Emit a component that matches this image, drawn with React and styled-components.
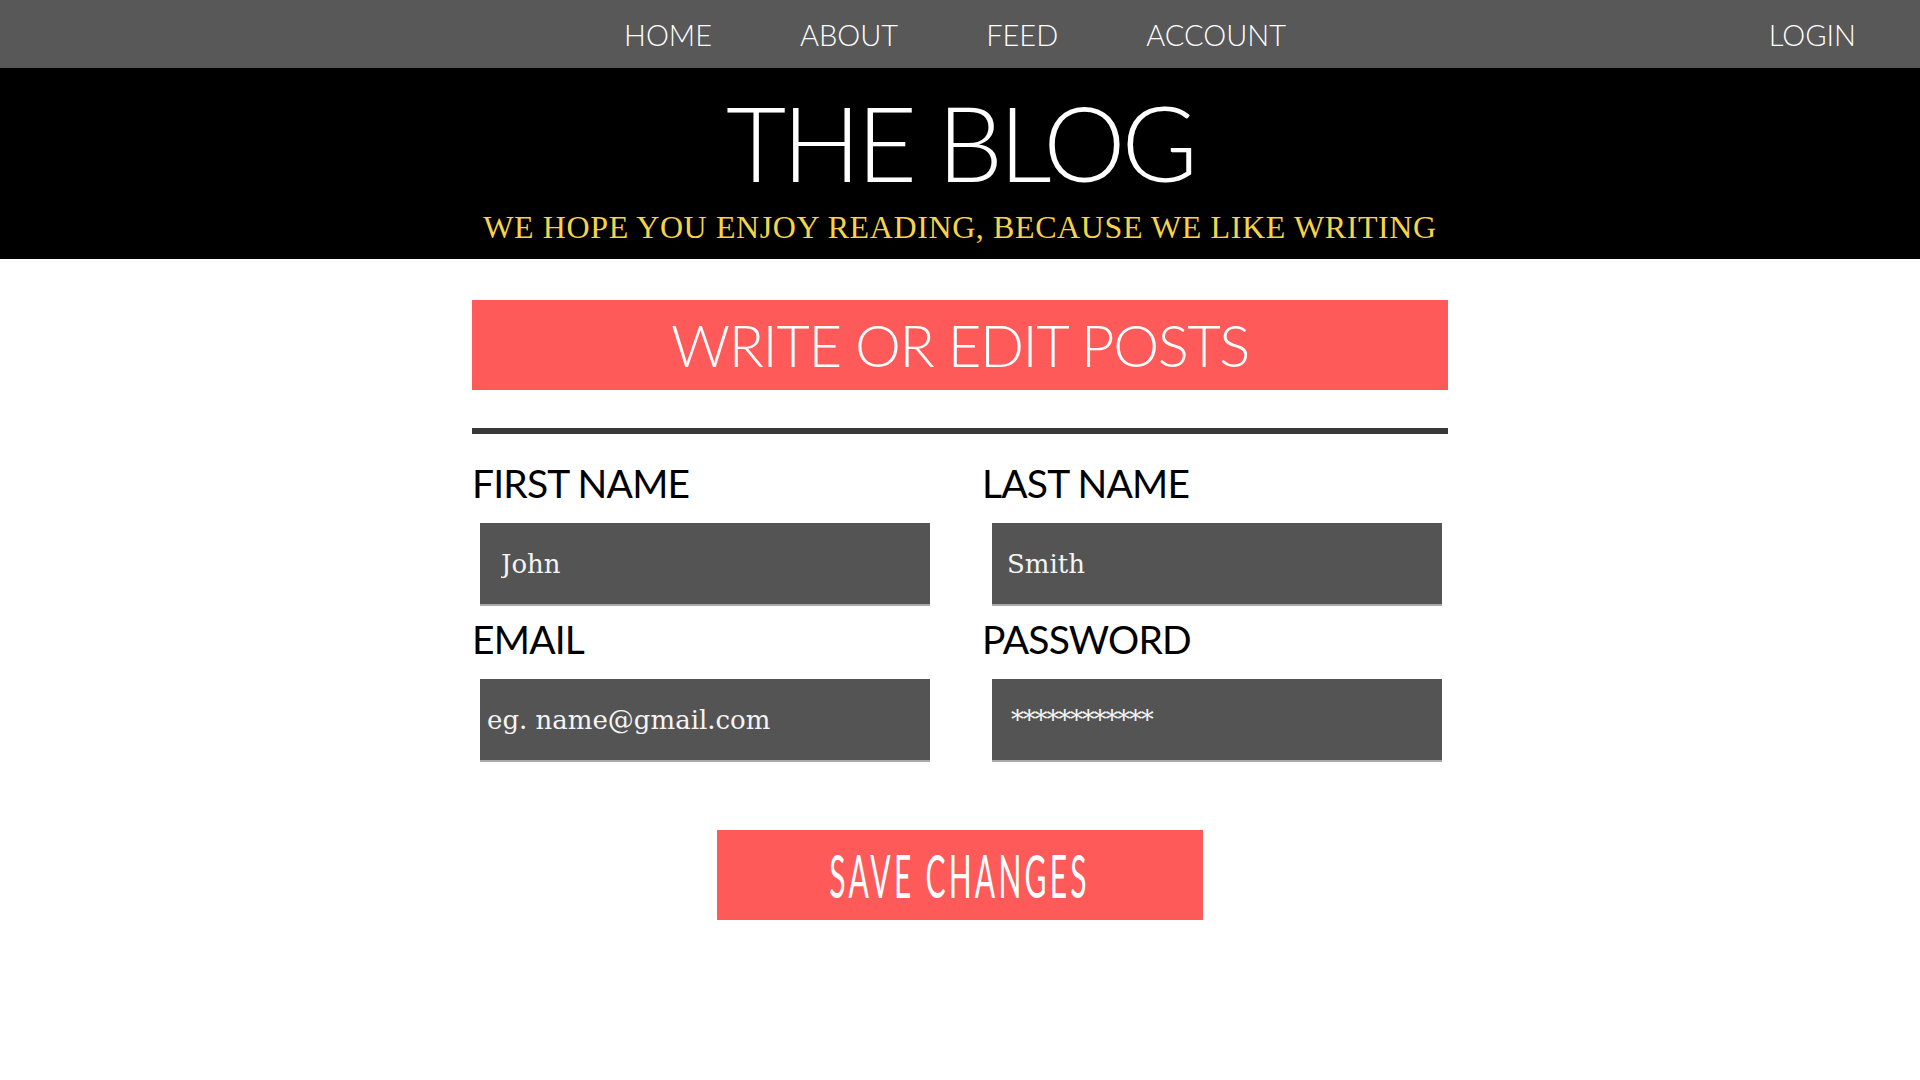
import styled, { createGlobalStyle } from 'styled-components';

const GlobalStyle = createGlobalStyle`
    body {
        margin: 0;
        background: #ffffff;
        font-family: Lato, "Open Sans", sans-serif;
    }
`;

const NavBar = styled.nav`
    display: grid;
    grid-template-columns: 1fr auto 1fr;
    align-items: center;
    height: 68px;
    background-color: #585858;
`;

const NavGroup = styled.div`
    display: flex;
    gap: ${props => props.gap || '88px'};
    justify-content: ${props => props.justify || 'center'};
    padding-right: ${props => props.padRight || '0'};
`;

const NavLink = styled.a`
    color: #ffffff;
    font-family: Lato, sans-serif;
    font-weight: 300;
    font-size: 29px;
    line-height: 1;
    text-decoration: none;
    cursor: pointer;
`;

const Header = styled.header`
    display: flex;
    flex-direction: column;
    align-items: center;
    background-color: #000000;
    padding: 22px 0 16px;
`;

const Title = styled.h1`
    margin: 0;
    color: #ffffff;
    font-family: Lato, sans-serif;
    font-weight: 300;
    font-size: 104px;
    line-height: 1;
    letter-spacing: -4px;
`;

const Tagline = styled.p`
    margin: 17px 0 0;
    color: #f6d44a;
    font-family: "Liberation Serif", serif;
    font-size: 32px;
    line-height: 1;
    letter-spacing: 0.6px;
`;

const Main = styled.main`
    width: 976px;
    margin: 41px auto 0;
    display: flex;
    flex-direction: column;
`;

const Banner = styled.div`
    display: flex;
    align-items: center;
    justify-content: center;
    height: 90px;
    background-color: #ff5a5a;
    color: #ffffff;
    font-family: Lato, sans-serif;
    font-weight: 300;
    font-size: 58px;
    line-height: 1;
    letter-spacing: -1.4px;
`;

const Divider = styled.hr`
    margin: 38px 0 30px;
    border: none;
    height: 6px;
    background-color: #383838;
`;

const FormGrid = styled.div`
    display: grid;
    grid-template-columns: 466px 466px;
    column-gap: 44px;
    row-gap: 14px;
`;

const Field = styled.label`
    display: flex;
    flex-direction: column;
`;

const Label = styled.span`
    color: #000000;
    font-family: Lato, sans-serif;
    font-weight: 400;
    font-size: 39px;
    line-height: 1;
    letter-spacing: -0.8px;
    margin-bottom: 20px;
`;

const Input = styled.input`
    box-sizing: border-box;
    width: 450px;
    height: 83px;
    margin-left: ${props => props.offset || '8px'};
    padding: 0 0 0 ${props => props.pad || '20px'};
    border: none;
    border-bottom: 2px solid #a9a9a9;
    background-color: #545454;
    color: #f4f4f4;
    font-family: "DejaVu Serif", serif;
    font-size: 26px;
    letter-spacing: ${props => props.spacing || 'normal'};
    outline: none;

    &::placeholder {
        color: #f4f4f4;
        opacity: 1;
    }
`;

const SaveButton = styled.button`
    align-self: center;
    width: 486px;
    height: 90px;
    margin-top: 68px;
    border: none;
    background-color: #ff5a5a;
    color: #ffffff;
    cursor: pointer;
    display: flex;
    align-items: center;
    justify-content: center;
    padding: 0;
`;

const ButtonText = styled.span`
    display: inline-block;
    font-family: Lato, sans-serif;
    font-weight: 400;
    font-size: 60px;
    line-height: 1;
    letter-spacing: 6.5px;
    white-space: nowrap;
    transform: scaleX(0.5);
`;

const fields = [
    { label: 'FIRST NAME', value: 'John', pad: '21px', offset: '8px' },
    { label: 'LAST NAME', value: 'Smith', pad: '15px', offset: '10px' },
    { label: 'EMAIL', placeholder: 'eg. name@gmail.com', pad: '7px', offset: '8px' },
    { label: 'PASSWORD', value: '************', pad: '19px', offset: '10px', spacing: '-1.2px' },
];

function App() {
    return (
        <>
            <GlobalStyle />
            <NavBar>
                <div />
                <NavGroup padRight="10px">
                    <NavLink>HOME</NavLink>
                    <NavLink>ABOUT</NavLink>
                    <NavLink>FEED</NavLink>
                    <NavLink>ACCOUNT</NavLink>
                </NavGroup>
                <NavGroup justify="flex-end" padRight="64px">
                    <NavLink>LOGIN</NavLink>
                </NavGroup>
            </NavBar>
            <Header>
                <Title>THE BLOG</Title>
                <Tagline>WE HOPE YOU ENJOY READING, BECAUSE WE LIKE WRITING</Tagline>
            </Header>
            <Main>
                <Banner>WRITE OR EDIT POSTS</Banner>
                <Divider />
                <FormGrid>
                    {fields.map((f) => (
                        <Field key={f.label}>
                            <Label>{f.label}</Label>
                            <Input
                                type="text"
                                defaultValue={f.value}
                                placeholder={f.placeholder}
                                pad={f.pad}
                                offset={f.offset}
                                spacing={f.spacing}
                                readOnly
                            />
                        </Field>
                    ))}
                </FormGrid>
                <SaveButton>
                    <ButtonText>SAVE CHANGES</ButtonText>
                </SaveButton>
            </Main>
        </>
    );
}

export default App;
